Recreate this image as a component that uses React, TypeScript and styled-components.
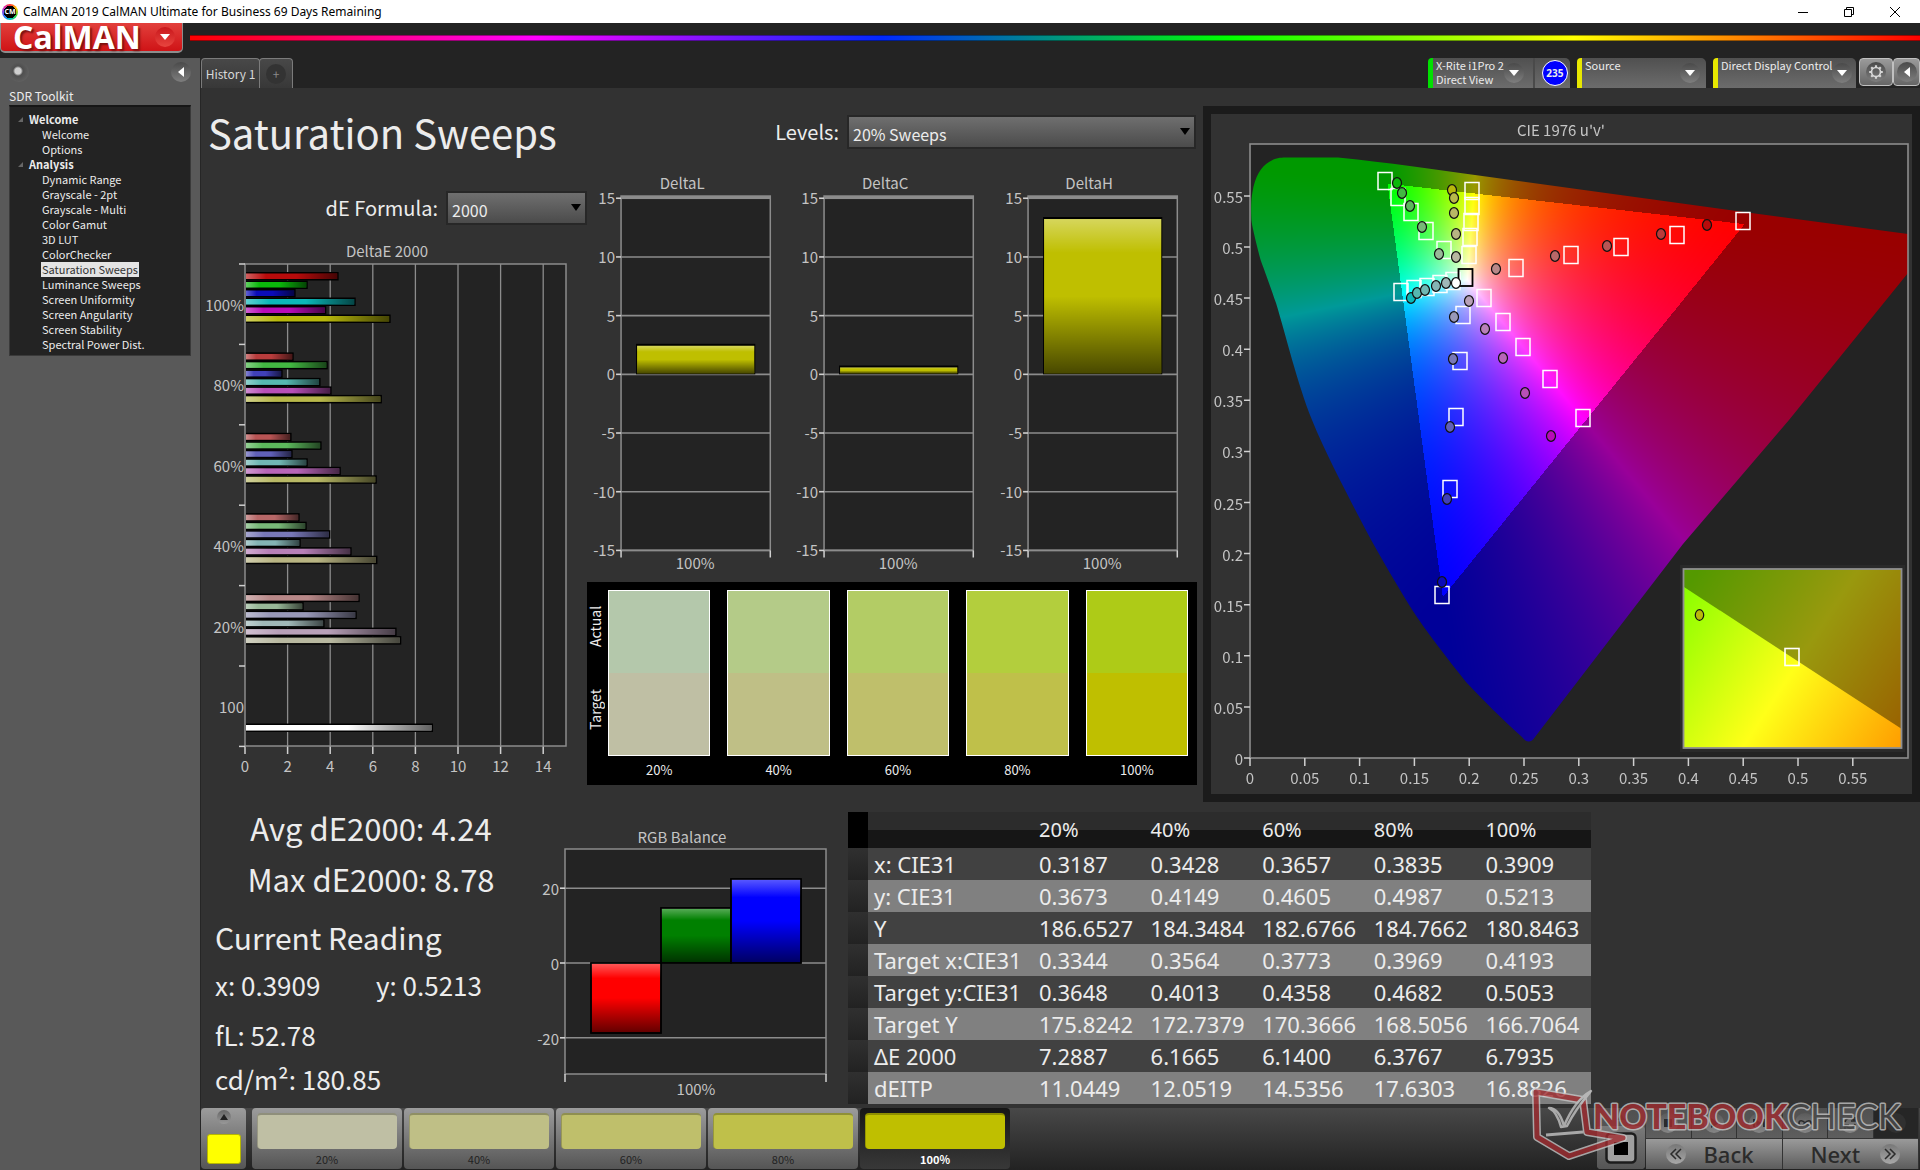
import React, { useEffect, useRef } from "react";
import styled, { createGlobalStyle, css } from "styled-components";

const UI = '"Noto Sans CJK SC", "Noto Sans", sans-serif';
const WIDE = '"Noto Sans", "Open Sans", sans-serif';

const GlobalStyle = createGlobalStyle`
  *, *::before, *::after { box-sizing: border-box; }
  body { margin: 0; background: #232323; color: #ececec; font-family: ${UI}; font-size: 12px; }
  button, select { font: inherit; color: inherit; margin: 0; padding: 0; border: 0; background: none; }
  svg { display: block; overflow: visible; }
  h1, h2, p, ul { margin: 0; padding: 0; font-weight: 400; }
`;

/* ---------- window frame ---------- */

const Shell = styled.div`
  display: flex;
  flex-direction: column;
  min-height: 100vh;
  position: relative;
`;

const TitleBar = styled.header`
  display: flex;
  align-items: center;
  height: 23px;
  padding-left: 2px;
  background: #fff;
  color: #000;
  font: 12px/23px ${WIDE};
`;

const AppBadge = styled.span`
  width: 16px;
  height: 16px;
  margin-right: 5px;
  border-radius: 50%;
  background: radial-gradient(circle, #000 55%, transparent 56%),
    conic-gradient(#f33, #fc0, #3c3, #0cc, #36f, #c3c, #f33);
  color: #fff;
  font: 700 7px/16px ${WIDE};
  text-align: center;
`;

const WindowButtons = styled.div`
  display: flex;
  margin-left: auto;
  padding-right: 2px;
`;

const WindowButton = styled.button`
  display: grid;
  place-items: center;
  width: 46px;
  height: 22px;
`;

const BrandRow = styled.div`
  display: flex;
  align-items: flex-start;
  gap: 7px;
  height: 35px;
  background: #232323;
`;

const BrandButton = styled.button`
  display: flex;
  align-items: center;
  justify-content: space-between;
  width: 183px;
  height: 30px;
  padding: 0 7px 0 12px;
  border: solid #8d8d8d;
  border-width: 0 1px 2px 1px;
  border-radius: 0 0 5px 5px;
  background: linear-gradient(#e2403c, #cf1316);
  color: #fff;
  font: 700 32px/28px "Open Sans", sans-serif;
  text-shadow: 2px 2px 2px #7c1010;
`;

const Spectrum = styled.div`
  flex: 1;
  height: 6px;
  margin-top: 12px;
  border: solid rgba(0, 0, 0, 0.4);
  border-width: 1px 0;
  background: linear-gradient(90deg, #f00, #f0f, #0028ff, #0f0, #ff0, #f00);
`;

const Body = styled.div`
  display: flex;
  flex: 1;
`;

const RoundIcon = styled.span<{ $size?: number; $tone?: string }>`
  display: grid;
  place-items: center;
  flex: none;
  width: ${(p) => p.$size ?? 20}px;
  height: ${(p) => p.$size ?? 20}px;
  border-radius: 50%;
  background: ${(p) => p.$tone ?? "linear-gradient(#4a4a4a, #7e7e7e)"};
`;

/* ---------- sidebar ---------- */

const Sidebar = styled.aside`
  flex: none;
  width: 200px;
  padding: 4px 9px;
  background: #595959;
`;

const SidebarTop = styled.div`
  display: flex;
  justify-content: space-between;
`;

const SidebarTitle = styled.h2`
  margin: 4px 0 0;
  height: 19px;
  font-size: 12px;
  line-height: 19px;
`;

const Tree = styled.nav`
  width: 182px;
  height: 251px;
  padding: 5px 0 0;
  border: 1px solid #3a3a3a;
  border-top: 2px solid #161616;
  background: #232323;
`;

const TreeGroup = styled.div`
  display: flex;
  align-items: center;
  gap: 6px;
  height: 15px;
  padding-left: 8px;
  font-size: 11px;
  font-weight: 700;
  line-height: 15px;
`;

const TreeItem = styled.a<{ $active?: boolean }>`
  display: block;
  width: fit-content;
  height: 15px;
  margin-left: 31px;
  padding: 0 1px;
  color: #ececec;
  font-size: 11px;
  line-height: 15px;
  text-decoration: none;
  ${(p) =>
    p.$active &&
    css`
      background: #e4e4e4;
      color: #333;
    `}
`;

/* ---------- toolbar ---------- */

const Main = styled.main`
  display: flex;
  flex: 1;
  flex-direction: column;
  min-width: 0;
  border-left: 1px solid #262626;
  background: #323232;
`;

const Toolbar = styled.div`
  display: flex;
  height: 30px;
  background: #232323;
`;

const Tab = styled.button<{ $width: number }>`
  display: grid;
  place-items: center;
  width: ${(p) => p.$width}px;
  height: 30px;
  border: 1px solid #7b7b7b;
  border-bottom: 0;
  border-radius: 4px 4px 0 0;
  background: linear-gradient(#484848, #383838);
  color: #d8d8d8;
  font-size: 12px;
  & + & { margin-left: -1px; color: #8a8a8a; }
`;

const Devices = styled.div`
  display: flex;
  margin-left: auto;
  gap: 7px;
`;

const Device = styled.button<{ $width: number; $flag: string }>`
  display: flex;
  width: ${(p) => p.$width}px;
  height: 30px;
  padding: 0 6px 0 3px;
  border-left: 5px solid ${(p) => p.$flag};
  border-radius: 4px 5px 0 0;
  background: linear-gradient(#505050, #6c6c6c);
  font-size: 11px;
  line-height: 14px;
  text-align: left;
  white-space: nowrap;
  & > span:first-child { flex: 1; }
  & > ${RoundIcon} { align-self: center; }
`;

const LevelBadge = styled.span`
  display: flex;
  align-items: center;
  align-self: stretch;
  margin-left: 9px;
  padding-left: 7px;
  border-left: 2px solid #4a4a4a;
  & > b {
    width: 26px;
    height: 26px;
    border: 1px solid #fff;
    border-radius: 50%;
    background: #00f;
    font: 700 10px/24px ${WIDE};
    text-align: center;
  }
`;

const SquareButton = styled.button<{ $width: number }>`
  display: grid;
  place-items: center;
  width: ${(p) => p.$width}px;
  height: 28px;
  border: 1px solid #c0c0c0;
  border-radius: 4px;
  background: linear-gradient(#9a9a9a, #666);
`;

const ToolPair = styled.div`
  display: flex;
  margin-left: -4px;
`;

/* ---------- workspace ---------- */

const Upper = styled.section`
  display: grid;
  grid-template-columns: minmax(0, 1002fr) minmax(0, 717fr);
  padding-top: 18px;
`;

const Left = styled.div`
  display: grid;
  grid-template-columns: minmax(0, 386fr) minmax(0, 616fr);
  grid-template-rows: 52px 1fr;
`;

const HeadRow = styled.div`
  grid-column: 1 / -1;
  display: flex;
  align-items: center;
  justify-content: space-between;
  padding: 0 7px;
`;

const PageTitle = styled.h1`
  font-size: 40px;
  line-height: 50px;
  white-space: nowrap;
`;

const Field = styled.label`
  display: flex;
  align-items: center;
  justify-content: flex-end;
  gap: 8px;
  font-size: 20px;
  line-height: 34px;
`;

const SelectBox = styled.span<{ $width: number }>`
  position: relative;
  width: ${(p) => p.$width}px;
  &::after {
    content: "";
    position: absolute;
    right: 6px;
    top: 13px;
    border: solid transparent;
    border-width: 7px 5px 0;
    border-top-color: #000;
    pointer-events: none;
  }
  & > select {
    display: block;
    width: 100%;
    height: 34px;
    padding: 4px 20px 0 4px;
    border: 2px solid #272727;
    appearance: none;
    background: linear-gradient(#6f6f6f, #4b4b4b);
    font-size: 16px;
    line-height: 26px;
  }
`;

const DeltaEColumn = styled.div`
  padding-top: 33px;
  & > svg { margin-top: 15px; }
`;

const DeltaColumn = styled.div`
  padding: 12px 6px 0 0;
`;

const DeltaRow = styled.div`
  display: grid;
  grid-template-columns: repeat(3, minmax(0, 1fr));
  margin-bottom: 3px;
`;

const Compare = styled.div`
  display: grid;
  grid-template-columns: 17px 1fr;
  height: 203px;
  padding: 8px 9px 0 4px;
  background: #000;
`;

const SideLabels = styled.div`
  display: grid;
  grid-template-rows: 73px 93px;
  width: 17px;
  margin-left: -4px;
  font-size: 14px;
  line-height: 17px;
  & > span {
    writing-mode: vertical-rl;
    transform: rotate(180deg);
    text-align: center;
  }
`;

const Patches = styled.div`
  display: grid;
  grid-template-columns: repeat(5, minmax(0, 1fr));
  gap: 17px;
`;

const Patch = styled.figure<{ $actual: string; $target: string }>`
  margin: 0;
  font-size: 13px;
  line-height: 28px;
  text-align: center;
  &::before {
    content: "";
    display: block;
    height: 166px;
    border: 1px solid #fff;
    background: linear-gradient(${(p) => p.$actual} 50%, ${(p) => p.$target} 50%);
  }
`;

const CiePanel = styled.div`
  padding: 8px;
  background: #1b1b1b;
`;

const CieSurface = styled.div`
  position: relative;
  background: #323232;
  & > canvas {
    position: absolute;
    inset: 0;
    width: 100%;
    height: 100%;
  }
  & > svg { position: relative; }
`;

const Lower = styled.section`
  display: grid;
  grid-template-columns: minmax(0, 340fr) minmax(0, 307fr) minmax(0, 743fr) minmax(0, 329fr);
  flex: 1;
  min-height: 304px;
`;

const Readings = styled.div`
  padding-left: 14px;
`;

const Summary = styled.div`
  margin: 0 0 7px -14px;
  font-size: 31px;
  line-height: 51px;
  text-align: center;
`;

const ReadingHead = styled.h2`
  font-size: 30px;
  line-height: 52px;
`;

const Reading = styled.p`
  display: flex;
  font-size: 26px;
  line-height: 44px;
  white-space: nowrap;
  & > span { min-width: 161px; }
  & + & { margin-top: 6px; }
  & + & + & { margin-top: 0; }
`;

const BalanceSlot = styled.div`
  padding-top: 22px;
`;

const TableSlot = styled.div`
  padding-top: 10px;
`;

const DataTable = styled.table`
  width: 100%;
  border-collapse: collapse;
  table-layout: fixed;
  font: 22px/32px ${WIDE};
  col.gutter { width: 20px; }
  col.name { width: 165px; }
  th, td { padding: 0 0 0 6px; font-weight: 400; text-align: left; white-space: nowrap; }
  thead th {
    height: 36px;
    font-size: 20px;
    background: linear-gradient(#2c2c2c 50%, #161616 50%);
  }
  thead td { background: #000; }
  tbody td:first-child { background: linear-gradient(#303030, #222); }
  tbody tr { height: 32px; background: #414141; }
  tbody tr:nth-child(even) { background: #808080; }
`;

/* ---------- bottom bar ---------- */

const BottomBar = styled.footer`
  display: flex;
  gap: 2px;
  height: 62px;
  background: linear-gradient(#484848, #222);
`;

const PatternToggle = styled.button`
  display: flex;
  flex-direction: column;
  align-items: center;
  justify-content: space-between;
  width: 45px;
  height: 61px;
  margin-right: 4px;
  padding: 2px 0 5px;
  border-radius: 4px;
  background: linear-gradient(#9c9c9c, #555);
`;

const YellowChip = styled.span`
  width: 34px;
  height: 30px;
  border: 1px solid #b5b500;
  border-radius: 3px;
  background: #ff0;
`;

const Pattern = styled.button<{ $color: string; $active?: boolean }>`
  width: 150px;
  height: 61px;
  padding: 5px 5px 0;
  border-radius: 4px;
  background: ${(p) => (p.$active ? "linear-gradient(#161616, #383838)" : "linear-gradient(#9c9c9c, #555)")};
  color: ${(p) => (p.$active ? "#fff" : "#222")};
  font-size: 11px;
  font-weight: ${(p) => (p.$active ? 700 : 400)};
  line-height: 20px;
  &::before {
    content: "";
    display: block;
    height: 36px;
    border-top: 2px solid rgba(0, 0, 0, 0.25);
    border-left: 1px solid rgba(0, 0, 0, 0.2);
    border-radius: 4px;
    background: ${(p) => p.$color};
  }
`;

const Transport = styled.div`
  display: flex;
  gap: 1px;
  margin-left: auto;
  padding-right: 1px;
`;

const StopPanel = styled.div`
  display: flex;
  flex-direction: column;
  width: 48px;
  height: 61px;
  border-radius: 4px;
  background: linear-gradient(#505050, #606060);
`;

const StopTop = styled.button`
  display: grid;
  place-items: center;
  height: 18px;
`;

const StopButton = styled.button`
  display: grid;
  place-items: center;
  height: 43px;
  border-radius: 4px;
  background: linear-gradient(#7a7a7a, #555);
`;

const TransportGrid = styled.div`
  display: grid;
  grid-template-columns: repeat(6, 1fr);
  grid-template-rows: 30px 30px;
  gap: 1px 0;
  width: 273px;
`;

const SmallButton = styled.button<{ $off?: boolean }>`
  display: grid;
  place-items: center;
  border-right: 1px solid #333;
  background: ${(p) => (p.$off ? "#262626" : "linear-gradient(#505050, #5e5e5e)")};
`;

const NavButton = styled.button`
  grid-column: span 3;
  display: flex;
  align-items: center;
  justify-content: space-between;
  padding: 0 28px 0 20px;
  border-right: 1px solid #333;
  background: linear-gradient(#9a9a9a, #5c5c5c);
  color: #2b2b2b;
  font: 500 22px/30px ${WIDE};
  & + & { padding: 0 18px 0 28px; }
`;

const Watermark = styled.svg`
  position: absolute;
  right: 5px;
  bottom: 8px;
  opacity: 0.8;
  pointer-events: none;
`;

/* ---------- charts ---------- */

const AXIS = "#8c8c8c";
const LABEL = "#c4c4c4";

const ChartText = styled.text`
  fill: ${LABEL};
  font-family: ${UI};
  font-size: 15px;
`;

const ChartTitle = styled(ChartText)`
  text-anchor: middle;
`;

type Family = "r" | "g" | "b" | "c" | "m" | "y";
const FAMILIES: Family[] = ["r", "g", "b", "c", "m", "y"];

const SHADES: Record<Family, string[]> = {
  r: ["#b80b0b", "#b83c3c", "#b85454", "#b86868", "#b88888"],
  g: ["#0bb80b", "#42b842", "#5cb85c", "#78b878", "#98b898"],
  b: ["#0b0bb8", "#4040b8", "#6060b8", "#7878b8", "#9898b8"],
  c: ["#0bb8b8", "#55b8b0", "#70b8b4", "#84b4b4", "#a0b8b8"],
  m: ["#b80bb8", "#b84fb8", "#b865b8", "#b880b8", "#b8a0b8"],
  y: ["#b8b80b", "#b8b84a", "#b8b865", "#b8b482", "#b8b8a0"],
};

const DELTA_E = [
  { name: "100%", values: [4.35, 2.9, 2.33, 5.15, 3.77, 6.79] },
  { name: "80%", values: [2.24, 3.84, 1.72, 3.5, 4.02, 6.38] },
  { name: "60%", values: [2.14, 3.55, 2.19, 2.9, 4.45, 6.14] },
  { name: "40%", values: [2.52, 2.85, 3.96, 2.57, 4.96, 6.17] },
  { name: "20%", values: [5.34, 2.71, 5.2, 3.69, 7.07, 7.29] },
];

function DeltaEChart() {
  const left = 44;
  const top = 24;
  const bottom = 506;
  const unit = 21.3;
  const band = 80.4;
  return (
    <svg viewBox="0 0 386 545" width="100%" role="img" aria-label="DeltaE 2000">
      <defs>
        <linearGradient id="sheenX">
          <stop offset="0" stopColor="#fff" stopOpacity="0.35" />
          <stop offset="0.22" stopColor="#fff" stopOpacity="0" />
          <stop offset="0.55" stopColor="#000" stopOpacity="0" />
          <stop offset="1" stopColor="#000" stopOpacity="0.62" />
        </linearGradient>
      </defs>
      <ChartTitle x="186" y="17">DeltaE 2000</ChartTitle>
      <rect x={left} y={top} width="321" height={bottom - top} fill="#232323" />
      {[2, 4, 6, 8, 10, 12, 14].map((n) => (
        <path key={n} d={`M${left + n * unit} ${top}V${bottom}`} stroke={AXIS} strokeWidth="1.3" />
      ))}
      {[0, 2, 4, 6, 8, 10, 12, 14].map((n) => (
        <g key={n}>
          <path d={`M${left + n * unit} ${bottom}v8`} stroke="#d0d0d0" strokeWidth="1.5" />
          <ChartText x={left + n * unit} y="532" textAnchor="middle">{n}</ChartText>
        </g>
      ))}
      <rect x={left} y={top} width="321" height={bottom - top} fill="none" stroke={AXIS} strokeWidth="1.5" />
      {[0, 1, 2, 3, 4, 5, 6].map((n) => (
        <path key={n} d={`M${left - 6} ${top + n * band}h6`} stroke="#d0d0d0" strokeWidth="1.5" />
      ))}
      {DELTA_E.map((group, g) => (
        <g key={group.name}>
          <ChartText x={left - 1} y={71 + g * band} textAnchor="end">{group.name}</ChartText>
          {group.values.map((v, i) => {
            const y = 32 + g * band + i * 8.5;
            return (
              <g key={i}>
                <rect x={left + 1} y={y} width={v * unit} height="8.5" fill="#000" />
                <rect x={left + 1} y={y + 1.5} width={v * unit - 1.5} height="5.5" fill={SHADES[FAMILIES[i]][g]} />
                <rect x={left + 1} y={y + 1.5} width={v * unit - 1.5} height="5.5" fill="url(#sheenX)" />
              </g>
            );
          })}
        </g>
      ))}
      <ChartText x={left - 1} y="473" textAnchor="end">100</ChartText>
      <rect x={left + 1} y="483.5" width={8.78 * unit} height="8.5" fill="#000" />
      <rect x={left + 1} y="485" width={8.78 * unit - 1.5} height="5.5" fill="#fff" />
      <rect x={left + 1} y="485" width={8.78 * unit - 1.5} height="5.5" fill="url(#sheenX)" />
    </svg>
  );
}

function SheenY({ id }: { id: string }) {
  return (
    <defs>
      <linearGradient id={id} x2="0" y2="1">
        <stop offset="0" stopColor="#fff" stopOpacity="0.36" />
        <stop offset="0.22" stopColor="#fff" stopOpacity="0" />
        <stop offset="0.5" stopColor="#000" stopOpacity="0" />
        <stop offset="1" stopColor="#000" stopOpacity="0.62" />
      </linearGradient>
    </defs>
  );
}

function DeltaChart({ title, value }: { title: string; value: number }) {
  const left = 34;
  const width = 149;
  const zero = 204;
  const unit = 11.72;
  const id = `sheen-${title}`;
  return (
    <svg viewBox="0 0 203 408" width="100%" role="img" aria-label={title}>
      <SheenY id={id} />
      <ChartTitle x="95" y="19">{title}</ChartTitle>
      <rect x={left} y="26" width={width} height={zero + 15 * unit - 26} fill="#232323" stroke={AXIS} strokeWidth="1.5" />
      <rect x={left} y="26" width={width} height="3" fill={AXIS} />
      {[15, 10, 5, 0, -5, -10, -15].map((n) => (
        <g key={n}>
          <path d={`M${left} ${zero - n * unit}h${width}`} stroke={AXIS} strokeWidth="1.6" />
          <path d={`M${left - 5} ${zero - n * unit}h5`} stroke="#d0d0d0" strokeWidth="1.6" />
          <ChartText x={left - 6} y={zero - n * unit + 6} textAnchor="end">{n}</ChartText>
        </g>
      ))}
      <path d={`M${left} 380v7M${left + width} 380v7`} stroke="#d0d0d0" strokeWidth="1.5" />
      <rect x="49" y={zero - value * unit} width="119" height={value * unit} fill="#000" />
      <rect x="50" y={zero - value * unit + 2} width="117" height={value * unit - 3} fill="#bfbf00" />
      <rect x="50" y={zero - value * unit + 2} width="117" height={value * unit - 3} fill={`url(#${id})`} />
      <ChartText x="108" y="398" textAnchor="middle">100%</ChartText>
    </svg>
  );
}

function BalanceChart() {
  const left = 24;
  const right = 285;
  const zero = 139;
  const bars = [
    { x: 50, y: 139, h: 70, color: "#f00" },
    { x: 120, y: 84, h: 55, color: "#008000" },
    { x: 190, y: 55, h: 84, color: "#00f" },
  ];
  return (
    <svg viewBox="0 0 307 280" width="100%" role="img" aria-label="RGB Balance">
      <SheenY id="sheenBalance" />
      <ChartTitle x="141" y="19">RGB Balance</ChartTitle>
      <rect x={left} y="25" width={right - left} height="225" fill="#232323" stroke={AXIS} strokeWidth="1.5" />
      {[20, 0, -20].map((n) => (
        <g key={n}>
          <path d={`M${left} ${zero - n * 3.74}H${right}`} stroke={AXIS} strokeWidth="1.6" />
          <path d={`M${left - 5} ${zero - n * 3.74}h5`} stroke="#d0d0d0" strokeWidth="1.6" />
          <ChartText x={left - 6} y={zero - n * 3.74 + 7} textAnchor="end">{n}</ChartText>
        </g>
      ))}
      <path d={`M${left} 250v8M${right} 250v8`} stroke="#d0d0d0" strokeWidth="1.5" />
      {bars.map((b) => (
        <g key={b.x} stroke="#000" strokeWidth="1.5">
          <rect x={b.x} y={b.y} width="70" height={b.h} fill={b.color} />
          <rect x={b.x} y={b.y} width="70" height={b.h} fill="url(#sheenBalance)" />
        </g>
      ))}
      <ChartText x="155" y="271" textAnchor="middle">100%</ChartText>
    </svg>
  );
}

/* CIE 1976 diagram: chart units, with u' and v' mapped onto the plot area. */
const CIE = { width: 701, height: 680, left: 39, right: 697, top: 30, bottom: 644, su: 1096, sv: 1022 };

const LOCUS =
  "M74 43.5H127C180 49 220 55 264 61L531 97.7L697 120V159L578 306L472 430L324 623Q318 632 311 623" +
  "C290 604 272 586 255 568C236 544 214 516 200 494C180 461 164 434 148 403C131 370 113.5 337 101 306" +
  "C86 268 75 222 65 189" +
  "C56 162 50 148 48.7 142.7C44 124 41 112 40.4 106C40 94 40 86 41.3 79C44 62 50 53 58 48C64 44 70 43.5 74 43.5Z";

const TARGETS: [number, number][] = [
  [174, 67], [187, 83], [200, 98], [215, 117], [233, 136],
  [261, 77], [261, 92], [260, 108], [259, 123], [258, 141],
  [305, 154], [360, 141], [410, 133], [466, 121], [532, 107],
  [190, 178], [203, 175], [216, 173], [229, 170], [242, 167],
  [273, 184], [292, 208], [312, 233], [339, 265], [372, 304],
  [252, 201], [249, 247], [245, 303], [239, 375], [231, 481],
];

const MEASURED: Record<Family, [number, number][]> = {
  g: [[186, 69], [191, 79], [199, 92], [211, 113], [228, 140]],
  y: [[241, 76], [243, 84], [243, 99], [245, 120], [245, 143]],
  r: [[496, 111], [450, 120], [396, 132], [344, 142], [285, 155]],
  c: [[200, 184], [206, 179], [214, 176], [225, 172], [235, 169]],
  m: [[340, 322], [314, 279], [292, 244], [274, 215], [258, 187]],
  b: [[231, 468], [236, 385], [239, 313], [242, 245], [243, 203]],
};

function paintGamut(canvas: HTMLCanvasElement) {
  const ctx = canvas.getContext("2d");
  if (!ctx) return;
  const { width, height } = CIE;
  const field = document.createElement("canvas");
  field.width = width;
  field.height = height;
  const fieldCtx = field.getContext("2d")!;
  const image = fieldCtx.createImageData(width, height);
  for (let py = 0; py < height; py++) {
    for (let px = 0; px < width; px++) {
      const u = (px - CIE.left) / CIE.su;
      const v = Math.max((CIE.bottom - py) / CIE.sv, 0.001);
      const d = 6 * u - 16 * v + 12;
      const x = (9 * u) / d;
      const y = (4 * v) / d;
      const X = x / y;
      const Z = (1 - x - y) / y;
      const rgb = [
        3.2406 * X - 1.5372 - 0.4986 * Z,
        -0.9689 * X + 1.8758 + 0.0415 * Z,
        0.0557 * X - 0.204 + 1.057 * Z,
      ];
      const peak = Math.max(...rgb);
      const level = Math.min(...rgb) < 0 ? 0.6 : 1;
      const at = (py * width + px) * 4;
      rgb.forEach((c, i) => {
        image.data[at + i] = 255 * level * Math.pow(Math.max(c, 0) / peak, 1.2);
      });
      image.data[at + 3] = 255;
    }
  }
  fieldCtx.putImageData(image, 0, 0);
  ctx.fillStyle = "#232323";
  ctx.fillRect(CIE.left, CIE.top, CIE.right - CIE.left, CIE.bottom - CIE.top);
  ctx.save();
  ctx.clip(new Path2D(LOCUS));
  ctx.drawImage(field, 0, 0);
  ctx.restore();
}

function CieChart() {
  const ref = useRef<HTMLCanvasElement>(null);
  useEffect(() => {
    if (ref.current) paintGamut(ref.current);
  }, []);
  const ticks = Array.from({ length: 12 }, (_, i) => i * 0.05);
  const name = (n: number) => String(Number(n.toFixed(2)));
  return (
    <CieSurface>
      <canvas ref={ref} width={CIE.width} height={CIE.height} />
      <svg viewBox="0 0 701 680" width="100%" role="img" aria-label="CIE 1976 u'v'">
        <defs>
          <linearGradient id="zoomHue" gradientUnits="userSpaceOnUse" x1="465" y1="490" x2="690" y2="636">
            <stop offset="0" stopColor="#8cff00" />
            <stop offset="0.5" stopColor="#ffff18" />
            <stop offset="1" stopColor="#ff9c00" />
          </linearGradient>
        </defs>
        <ChartTitle x="350" y="22">CIE 1976 u'v'</ChartTitle>
        <rect x={CIE.left} y={CIE.top} width={CIE.right - CIE.left} height={CIE.bottom - CIE.top} fill="none" stroke={AXIS} strokeWidth="1.6" />
        {ticks.map((t) => (
          <g key={t}>
            <path d={`M${CIE.left + t * CIE.su} ${CIE.bottom}v8M${CIE.left - 6} ${CIE.bottom - t * CIE.sv}h6`} stroke="#d0d0d0" strokeWidth="1.5" />
            <ChartText x={CIE.left + t * CIE.su} y="670" textAnchor="middle">{name(t)}</ChartText>
            <ChartText x={CIE.left - 7} y={CIE.bottom - t * CIE.sv + 7} textAnchor="end">{name(t)}</ChartText>
          </g>
        ))}
        {TARGETS.map(([x, y]) => (
          <rect key={`${x}-${y}`} x={x - 7} y={y - 8.5} width="14" height="17" fill="none" stroke="#fff" strokeWidth="1.5" />
        ))}
        <rect x="247.5" y="155" width="14" height="17" fill="none" stroke="#000" strokeWidth="1.8" />
        {FAMILIES.map((f) =>
          MEASURED[f].map(([x, y], i) => (
            <ellipse key={`${f}${i}`} cx={x} cy={y} rx="4.5" ry="5.3" fill={SHADES[f][i]} stroke="#111" strokeWidth="1.2" />
          ))
        )}
        <ellipse cx="245" cy="169" rx="4.5" ry="5.3" fill="#fff" stroke="#111" strokeWidth="1.2" />
        <rect x="469" y="451" width="225" height="187" fill="#2a2a2a" />
        <rect x="473" y="455" width="217" height="179" fill="url(#zoomHue)" />
        <path d="M473 455H690V614.5L473 473Z" fill="#000" fillOpacity="0.4" />
        <rect x="472.5" y="455" width="218" height="179" fill="none" stroke="#8f8f8f" strokeWidth="1.8" />
        <ellipse cx="488.5" cy="501" rx="4.2" ry="5.3" fill="#b8b80b" stroke="#111" strokeWidth="1.2" />
        <rect x="574" y="534.5" width="14" height="17" fill="none" stroke="#fff" strokeWidth="1.6" />
      </svg>
    </CieSurface>
  );
}

/* ---------- data ---------- */

const COLUMNS = ["20%", "40%", "60%", "80%", "100%"];

const ROWS: [string, string[]][] = [
  ["x: CIE31", ["0.3187", "0.3428", "0.3657", "0.3835", "0.3909"]],
  ["y: CIE31", ["0.3673", "0.4149", "0.4605", "0.4987", "0.5213"]],
  ["Y", ["186.6527", "184.3484", "182.6766", "184.7662", "180.8463"]],
  ["Target x:CIE31", ["0.3344", "0.3564", "0.3773", "0.3969", "0.4193"]],
  ["Target y:CIE31", ["0.3648", "0.4013", "0.4358", "0.4682", "0.5053"]],
  ["Target Y", ["175.8242", "172.7379", "170.3666", "168.5056", "166.7064"]],
  ["ΔE 2000", ["7.2887", "6.1665", "6.1400", "6.3767", "6.7935"]],
  ["dEITP", ["11.0449", "12.0519", "14.5356", "17.6303", "16.8826"]],
];

const PATCHES = [
  { name: "20%", actual: "#b4c8ab", target: "#bfbfa4" },
  { name: "40%", actual: "#b4cb88", target: "#bfbf86" },
  { name: "60%", actual: "#b3cc65", target: "#bfbf6b" },
  { name: "80%", actual: "#b3ce3d", target: "#bfc04a" },
  { name: "100%", actual: "#aecb17", target: "#bfbf00" },
];

const TREE = [
  { name: "Welcome", items: ["Welcome", "Options"] },
  {
    name: "Analysis",
    items: [
      "Dynamic Range", "Grayscale - 2pt", "Grayscale - Multi", "Color Gamut", "3D LUT", "ColorChecker",
      "Saturation Sweeps", "Luminance Sweeps", "Screen Uniformity", "Screen Angularity", "Screen Stability",
      "Spectral Power Dist.",
    ],
  },
];

/* ---------- icons ---------- */

const Down = () => (
  <svg width="10" height="6" viewBox="0 0 10 6"><path d="M0 0h10L5 6z" fill="#fff" /></svg>
);

const LeftArrow = () => (
  <svg width="6" height="10" viewBox="0 0 6 10"><path d="M6 0v10L0 5z" fill="#fff" /></svg>
);

const Gear = () => (
  <svg width="16" height="16" viewBox="0 0 16 16" fill="none" stroke="#d6d6d6">
    <circle cx="8" cy="8" r="4.5" strokeWidth="1.7" />
    <path d="M8 3.5V1.2M8 12.5v2.3M3.5 8H1.2M12.5 8h2.3M4.8 4.8L3.2 3.2M11.2 11.2l1.6 1.6M4.8 11.2l-1.6 1.6M11.2 4.8l1.6-1.6" strokeWidth="2.2" />
  </svg>
);

const GLYPHS: { name: string; d: string; line?: boolean }[] = [
  { name: "Stop", d: "M3 3h8v8H3z" },
  { name: "Play", d: "M4 2l8 5-8 5z" },
  { name: "Step", d: "M1 3h2v8H1zM11 3h2v8h-2zM4.5 4l5 3-5 3z" },
  { name: "Loop", d: "M7 7C5 4 1 4 1 7s4 3 6 0 6-3 6 0-4 3-6 0", line: true },
  { name: "Refresh", d: "M2 6a5 5 0 0 1 9-2M12 1v4H8M12 8a5 5 0 0 1-9 2M2 13V9h4", line: true },
];

const Chevrons = ({ flip }: { flip?: boolean }) => (
  <RoundIcon $tone="linear-gradient(#777, #a8a8a8)">
    <svg width="12" height="12" viewBox="0 0 12 12" fill="none" stroke="#2b2b2b" strokeWidth="1.5">
      <path d={flip ? "M1 1l5 5-5 5M6 1l5 5-5 5" : "M6 1L1 6l5 5M11 1L6 6l5 5"} />
    </svg>
  </RoundIcon>
);

export default function App() {
  return (
    <Shell>
      <GlobalStyle />
      <TitleBar>
        <AppBadge>CM</AppBadge>
        CalMAN 2019 CalMAN Ultimate for Business 69 Days Remaining
        <WindowButtons>
          <WindowButton aria-label="Minimize">
            <svg width="10" height="10"><path d="M0 5.5h10" stroke="#000" /></svg>
          </WindowButton>
          <WindowButton aria-label="Restore">
            <svg width="10" height="10" fill="none" stroke="#000"><path d="M.5 2.5h7v7h-7zM2.5 2.5v-2h7v7h-2" /></svg>
          </WindowButton>
          <WindowButton aria-label="Close">
            <svg width="10" height="10" stroke="#000"><path d="M0 0l10 10M10 0L0 10" /></svg>
          </WindowButton>
        </WindowButtons>
      </TitleBar>

      <BrandRow>
        <BrandButton>
          CalMAN
          <RoundIcon $tone="linear-gradient(#c9171b, #e8453f)"><Down /></RoundIcon>
        </BrandButton>
        <Spectrum />
      </BrandRow>

      <Body>
        <Sidebar>
          <SidebarTop>
            <RoundIcon $tone="radial-gradient(circle at 45% 45%, #cfcfcf 0 3px, #4f4f4f 5px, #6c6c6c)" />
            <RoundIcon as="button" aria-label="Collapse sidebar"><LeftArrow /></RoundIcon>
          </SidebarTop>
          <SidebarTitle>SDR Toolkit</SidebarTitle>
          <Tree>
            {TREE.map((group) => (
              <React.Fragment key={group.name}>
                <TreeGroup>
                  <svg width="5" height="5"><path d="M5 0v5H0z" fill="#666" /></svg>
                  {group.name}
                </TreeGroup>
                {group.items.map((item) => (
                  <TreeItem key={item} href="#" $active={item === "Saturation Sweeps"}>{item}</TreeItem>
                ))}
              </React.Fragment>
            ))}
          </Tree>
        </Sidebar>

        <Main>
          <Toolbar>
            <Tab $width={59}>History 1</Tab>
            <Tab $width={34} aria-label="Add tab"><RoundIcon $tone="#333">+</RoundIcon></Tab>
            <Devices>
              <Device $width={142} $flag="#00e000">
                <span>X-Rite i1Pro 2<br />Direct View</span>
                <RoundIcon><Down /></RoundIcon>
                <LevelBadge><b>235</b></LevelBadge>
              </Device>
              <Device $width={129} $flag="#e8e800">
                <span>Source</span>
                <RoundIcon><Down /></RoundIcon>
              </Device>
              <Device $width={143} $flag="#e8e800">
                <span>Direct Display Control</span>
                <RoundIcon><Down /></RoundIcon>
              </Device>
              <ToolPair>
                <SquareButton $width={34} aria-label="Settings"><RoundIcon><Gear /></RoundIcon></SquareButton>
                <SquareButton $width={27} aria-label="Collapse panel"><RoundIcon><LeftArrow /></RoundIcon></SquareButton>
              </ToolPair>
            </Devices>
          </Toolbar>

          <Upper>
            <Left>
              <HeadRow>
                <PageTitle>Saturation Sweeps</PageTitle>
                <Field>
                  Levels:
                  <SelectBox $width={349}><select defaultValue="20% Sweeps"><option>20% Sweeps</option></select></SelectBox>
                </Field>
              </HeadRow>
              <DeltaEColumn>
                <Field>
                  dE Formula:
                  <SelectBox $width={141}><select defaultValue="2000"><option>2000</option></select></SelectBox>
                </Field>
                <DeltaEChart />
              </DeltaEColumn>
              <DeltaColumn>
                <DeltaRow>
                  <DeltaChart title="DeltaL" value={2.6} />
                  <DeltaChart title="DeltaC" value={0.75} />
                  <DeltaChart title="DeltaH" value={13.4} />
                </DeltaRow>
                <Compare>
                  <SideLabels><span>Actual</span><span>Target</span></SideLabels>
                  <Patches>
                    {PATCHES.map((p) => (
                      <Patch key={p.name} $actual={p.actual} $target={p.target}>{p.name}</Patch>
                    ))}
                  </Patches>
                </Compare>
              </DeltaColumn>
            </Left>
            <CiePanel><CieChart /></CiePanel>
          </Upper>

          <Lower>
            <Readings>
              <Summary>
                <p>Avg dE2000: 4.24</p>
                <p>Max dE2000: 8.78</p>
              </Summary>
              <ReadingHead>Current Reading</ReadingHead>
              <Reading><span>x: 0.3909</span><span>y: 0.5213</span></Reading>
              <Reading><span>fL: 52.78</span></Reading>
              <Reading><span>cd/m²: 180.85</span></Reading>
            </Readings>
            <BalanceSlot><BalanceChart /></BalanceSlot>
            <TableSlot>
              <DataTable>
                <colgroup>
                  <col className="gutter" />
                  <col className="name" />
                  {COLUMNS.map((c) => <col key={c} />)}
                </colgroup>
                <thead>
                  <tr><td /><th />{COLUMNS.map((c) => <th key={c} scope="col">{c}</th>)}</tr>
                </thead>
                <tbody>
                  {ROWS.map(([name, values]) => (
                    <tr key={name}>
                      <td />
                      <th scope="row">{name}</th>
                      {values.map((v, i) => <td key={i}>{v}</td>)}
                    </tr>
                  ))}
                </tbody>
              </DataTable>
            </TableSlot>
          </Lower>

          <BottomBar>
            <PatternToggle aria-label="Pattern window">
              <RoundIcon $size={14} $tone="linear-gradient(#666, #999)">
                <svg width="8" height="6"><path d="M0 6h8L4 0z" fill="#222" /></svg>
              </RoundIcon>
              <YellowChip />
            </PatternToggle>
            {PATCHES.map((p) => (
              <Pattern key={p.name} $color={p.target} $active={p.name === "100%"}>{p.name}</Pattern>
            ))}
            <Transport>
              <StopPanel>
                <StopTop aria-label="Expand">
                  <svg width="8" height="6"><path d="M0 6h8L4 0z" fill="#333" /></svg>
                </StopTop>
                <StopButton aria-label="Stop reading">
                  <svg width="32" height="32" viewBox="0 0 32 32">
                    <rect x="1.5" y="1.5" width="29" height="29" rx="4" fill="#a0a0a0" stroke="#1c1c1c" strokeWidth="2.5" />
                    <rect x="9" y="10" width="14" height="13" fill="#000" />
                  </svg>
                </StopButton>
              </StopPanel>
              <TransportGrid>
                {GLYPHS.map((g) => (
                  <SmallButton key={g.name} aria-label={g.name}>
                    <RoundIcon $tone="linear-gradient(#5a5a5a, #858585)">
                      <svg width="14" height="14" viewBox="0 0 14 14">
                        <path d={g.d} fill={g.line ? "none" : "#2b2b2b"} stroke={g.line ? "#2b2b2b" : "none"} strokeWidth="1.6" />
                      </svg>
                    </RoundIcon>
                  </SmallButton>
                ))}
                <SmallButton $off aria-label="Unavailable" disabled><RoundIcon $tone="#303030" /></SmallButton>
                <NavButton><Chevrons />Back</NavButton>
                <NavButton>Next<Chevrons flip /></NavButton>
              </TransportGrid>
            </Transport>
          </BottomBar>
        </Main>
      </Body>

      <Watermark width="384" height="78" viewBox="0 0 384 78" aria-label="Notebookcheck">
        <g fill="none" strokeLinejoin="round">
          <path d="M5 8L52 16L56 48L92 54L38 72L6 53Z" stroke="#c4c4c4" strokeWidth="8" />
          <path d="M5 8L52 16L56 48L92 54L38 72L6 53Z" stroke="#a02c30" strokeWidth="5" />
          <path d="M18 24Q28 24 33 42Q44 16 60 7Q44 26 36 42L30 43Q26 28 18 24Z" fill="#555" stroke="#c4c4c4" strokeWidth="2.5" />
          <path d="M15 51L52 48" stroke="#c4c4c4" strokeWidth="3" />
        </g>
        <g fontFamily="Lato, sans-serif" fontSize="34" strokeWidth="3" stroke="#c4c4c4" paintOrder="stroke" strokeLinejoin="round">
          <text x="62" y="45" fontWeight="900" fill="#a02c30">NOTEBOOK<tspan fontWeight="400" fill="#4a4a4a">CHECK</tspan></text>
        </g>
      </Watermark>
    </Shell>
  );
}
